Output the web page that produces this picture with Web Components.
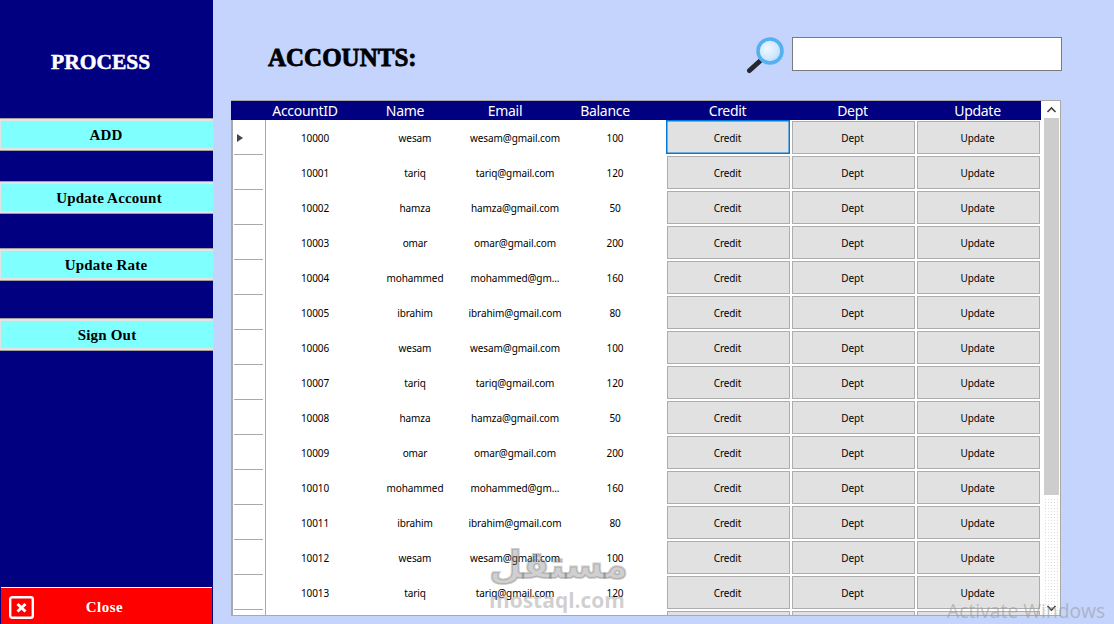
<!DOCTYPE html>
<html><head><meta charset="utf-8">
<style>
html,body{margin:0;padding:0;width:1114px;height:624px;overflow:hidden;background:#c4d4fd}
</style></head><body>
<app-shell>
  <side-nav slot="nav">
    <nav-button style="margin-top:118px">ADD</nav-button>
    <nav-button style="margin-top:30px" offset="3">Update Account</nav-button>
    <nav-button style="margin-top:34px">Update Rate</nav-button>
    <nav-button style="margin-top:37px" offset="1">Sign Out</nav-button>
  </side-nav>
  <accounts-panel slot="main"></accounts-panel>
</app-shell>
<script>
function tpl(html){const t=document.createElement('template');t.innerHTML=html;return t;}
function def(name,html,init){
  const t=tpl(html);
  customElements.define(name,class extends HTMLElement{
    constructor(){super();this.attachShadow({mode:'open'}).appendChild(t.content.cloneNode(true));}
    connectedCallback(){if(init)init.call(this,this.shadowRoot);}
  });
}
def('app-shell',`<style>
:host{display:flex;width:1114px;height:624px;position:relative;overflow:hidden;background:#c4d4fd}
.nav{flex:0 0 213px;display:flex}
.main{flex:1;min-width:0;display:flex}
.win{position:absolute;left:947px;top:600px;font:19.3px/22px "Open Sans","Noto Sans",sans-serif;color:rgba(150,150,150,.55);white-space:nowrap}
</style><div class="nav"><slot name="nav"></slot></div><div class="main"><slot name="main"></slot></div><div class="win">Activate Windows</div>`);

def('side-nav',`<style>
:host{display:flex;flex-direction:column;width:213px;height:624px;background:#000080;position:relative}
.title{position:absolute;left:51px;top:48px;width:99px;text-align:center;font:bold 21.5px/28px "Liberation Serif",serif;color:#fff;-webkit-text-stroke:.5px #fff;white-space:nowrap}
.spacer{flex:1}
.close{flex:0 0 36px;margin:0 1px 0 1px;border-top:1px solid #fff;background:#f00;color:#fff;display:flex;align-items:center;position:relative;font:bold 15px "Liberation Serif",serif;letter-spacing:.5px}
.close svg{position:absolute;left:8px;top:8px}
.close span{width:100%;text-align:center;padding-right:4px;box-sizing:border-box;margin-top:3px}
</style><div class="title">PROCESS</div><slot></slot><div class="spacer"></div>
<div class="close"><svg width="25" height="23" viewBox="0 0 25 23"><rect x="1.2" y="1.2" width="22.6" height="20.6" rx="2" fill="none" stroke="#fff" stroke-width="2.4"/><path d="M8.5 8l8 7.5M16.5 8l-8 7.5" stroke="#fff" stroke-width="3" fill="none"/></svg><span>Close</span></div>`);

def('nav-button',`<style>
:host{display:flex;height:33px;box-sizing:border-box;border-top:1px solid #a0a0a0;border-bottom:1px solid #a0a0a0;background:#80ffff;box-shadow:inset 0 2px 0 #e3e3e3,inset 0 -2px 0 #e3e3e3,inset 1px 0 0 #e3e3e3;align-items:center;justify-content:center;font:bold 15px "Liberation Serif",serif;color:#000;letter-spacing:.2px}
span{display:block;margin-top:2px;margin-right:1px}
</style><span><slot></slot></span>`,function(r){const o=this.getAttribute('offset');if(o)r.querySelector('span').style.marginLeft=(+o*2)+'px';});

def('search-box',`<style>
:host{display:flex;align-items:flex-start;gap:6px}
.in{width:270px;height:34px;box-sizing:border-box;background:#fff;border:1px solid #7a7a7a}
svg{display:block}
</style><svg width="40" height="38" viewBox="0 0 40 38">
<defs><radialGradient id="g" cx=".4" cy=".4" r=".7"><stop offset="0" stop-color="#f1f8ff"/><stop offset=".6" stop-color="#cfe8fd"/><stop offset="1" stop-color="#a5d4fb"/></radialGradient></defs>
<path d="M14 24L3.5 33.5" stroke="#23282e" stroke-width="5" stroke-linecap="round"/>
<circle cx="24" cy="14" r="12" fill="url(#g)" stroke="#55b0f2" stroke-width="3.6"/>
</svg><div class="in"></div>`);

def('grid-row',`<style>
:host{display:grid;grid-template-columns:33px 100px 100px 100px 100px 125px 125px 125px;height:35px;font:10px "Noto Sans","Open Sans",sans-serif;color:#000;letter-spacing:-.1px}
.hdr{border-right:1px solid #a9a9a9;position:relative;display:flex;align-items:center}
.hdr::after{content:"";position:absolute;left:1px;right:2px;bottom:0;height:1px;background:#a9a9a9}
.hdr i{display:none;margin-left:4px;width:0;height:0;border-left:6px solid #3c4654;border-top:4.5px solid transparent;border-bottom:4.5px solid transparent}
:host([current]) .hdr i{display:block}
.c{display:flex;align-items:center;justify-content:center;white-space:nowrap;padding-right:2px}
.b{margin:1px;box-sizing:border-box;background:#e1e1e1;border:1px solid #adadad;display:flex;align-items:center;justify-content:center;padding-right:2px}
.b.sel{border:1px solid #0078d7;box-shadow:inset 0 0 0 .5px #0078d7;margin:0 1px 1px 0;padding-top:1px;padding-left:1px}
</style><div class="hdr"><i></i></div><div class="c id"></div><div class="c name"></div><div class="c email"></div><div class="c bal"></div>
<div class="b cr"></div><div class="b dp"></div><div class="b up"></div>`,function(r){
  const g=a=>this.getAttribute(a)||'';
  r.querySelector('.id').textContent=g('aid');
  r.querySelector('.name').textContent=g('name');
  r.querySelector('.email').textContent=g('email');
  r.querySelector('.bal').textContent=g('bal');
  if(g('aid')){r.querySelector('.cr').textContent='Credit';r.querySelector('.dp').textContent='Dept';r.querySelector('.up').textContent='Update';}
  if(this.hasAttribute('current'))r.querySelector('.cr').classList.add('sel');
});

def('accounts-grid',`<style>
:host{display:flex;width:830px;height:516px;box-sizing:border-box;border:1px solid #a9a9a9;border-left:0;background:#fff;position:relative;overflow:hidden}
.body{width:810px;display:flex;flex-direction:column}
.head{display:grid;grid-template-columns:35px 100px 100px 100px 100px 125px 125px 125px;height:19px;flex:none;background:#000080;color:#fff;font:14px/20px "Noto Sans","Open Sans",sans-serif;letter-spacing:-.3px}
.head span{text-align:center;padding-right:22px;white-space:nowrap}
.head span.w{padding-right:2px}
.rows{flex:1;overflow:hidden;border-left:2px solid #a9a9a9}
.sb{flex:1;display:flex;flex-direction:column;align-items:center;margin-left:2px}
.up{height:17px;flex:none;width:100%;display:flex;align-items:center;justify-content:center}
.thumb{height:377px;flex:none;width:15px;background:#cdcdcd}
.track{flex:1;width:15px;margin-top:3px;background-image:radial-gradient(#dcdcdc .6px,transparent .7px);background-size:3px 3px}
.down{position:absolute;right:3px;bottom:3px}
</style><div class="body"><div class="head"><span></span><span>AccountID</span><span>Name</span><span>Email</span><span>Balance</span><span class="w">Credit</span><span class="w">Dept</span><span class="w">Update</span></div><div class="rows"></div></div>
<div class="sb"><div class="up"><svg width="11" height="7" viewBox="0 0 11 7"><path d="M1.5 6L5.5 2l4 4" fill="none" stroke="#404040" stroke-width="1.6"/></svg></div><div class="thumb"></div><div class="track"></div></div>
<svg class="down" width="11" height="7" viewBox="0 0 11 7"><path d="M1.5 1l4 4 4-4" fill="none" stroke="#404040" stroke-width="1.6"/></svg>`,function(r){
  const base=[['wesam','wesam@gmail.com',100],['tariq','tariq@gmail.com',120],['hamza','hamza@gmail.com',50],['omar','omar@gmail.com',200],['mohammed','mohammed@gm...',160],['ibrahim','ibrahim@gmail.com',80]];
  const box=r.querySelector('.rows');
  for(let i=0;i<15;i++){
    const d=base[i%6],e=document.createElement('grid-row');
    if(i<14){e.setAttribute('aid',10000+i);e.setAttribute('name',d[0]);e.setAttribute('email',d[1]);e.setAttribute('bal',d[2]);}
    if(i===0)e.setAttribute('current','');
    box.appendChild(e);
  }
});

def('accounts-panel',`<style>
:host{display:flex;flex-direction:column;flex:1;padding-left:18px;position:relative;min-width:0}
.top{height:100px;flex:none;display:flex;align-items:flex-start;justify-content:space-between;box-sizing:border-box;padding:37px 52px 0 37px}
h1{margin:0;font:bold 25px/42px "Liberation Serif",serif;color:#000;-webkit-text-stroke:.8px #000}
.mark{position:absolute;left:276px;top:541px;width:136px;text-align:center;color:rgba(120,120,120,.36);pointer-events:none;white-space:nowrap}
.ar{font:bold 38px/48px "DejaVu Sans",sans-serif;-webkit-text-stroke:2px rgba(120,120,120,.36)}
.en{font:bold 21px/20px "Open Sans","Noto Sans",sans-serif;margin-top:1px}
</style><div class="top"><h1>ACCOUNTS:</h1><search-box></search-box></div><accounts-grid></accounts-grid>
<div class="mark"><div class="ar">مستقل</div><div class="en">mostaql.com</div></div>`);
</script>
</body></html>
